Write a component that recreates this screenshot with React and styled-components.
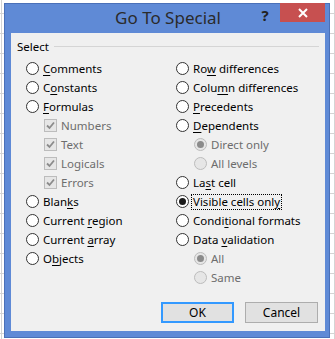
import React from "react";
import styled, { createGlobalStyle } from "styled-components";

const Global = createGlobalStyle`
  html, body { margin: 0; padding: 0; }
  body {
    width: 335px;
    height: 339px;
    overflow: hidden;
    font-family: "Noto Sans", "Open Sans", sans-serif;
    background-color: #fff;
    background-image:
      linear-gradient(to bottom, transparent 13px, #d4d4d4 13px, #d4d4d4 14px, transparent 14px),
      linear-gradient(to right, #d4d4d4 1px, transparent 1px);
    background-size: 100% 20px, 333px 100%;
    background-position: 0 0, 1px 0;
  }
`

const Page = styled.div`
    padding: 3px 5px 0 4px;
`

const Window = styled.div`
    width: 326px;
    height: 335px;
    box-sizing: border-box;
    border: 1px solid #4a70b8;
    background: #5f8ad6;
    display: flex;
    flex-direction: column;
`

const TitleBar = styled.div`
    height: 29px;
    display: flex;
    align-items: flex-start;
`

const Title = styled.div`
    flex: 1;
    text-align: center;
    font-size: 17px;
    color: #2b2b2b;
    padding-top: 2px;
    padding-left: 76px;
    white-space: nowrap;
`

const Help = styled.div`
    width: 20px;
    margin-top: 1px;
    font-size: 15px;
    font-weight: bold;
    color: #222;
    text-align: center;
    margin-right: 5px;
`

const Close = styled.div`
    width: 45px;
    height: 19px;
    margin-top: -1px;
    margin-right: 4px;
    background: #c75050;
    display: flex;
    align-items: center;
    justify-content: center;
`

const Body = styled.div`
    margin: 0 4px 6px 6px;
    flex: 1;
    background: #f0f0f0;
    padding: 0 6px;
    display: flex;
    flex-direction: column;
`

const GroupHead = styled.div`
    display: flex;
    align-items: center;
    height: 14px;
    margin-top: 6px;
    font-size: 11.5px;
    color: #000;
`

const GroupLine = styled.div`
    flex: 1;
    height: 1px;
    background: #d5d5d5;
    margin-left: 5px;
`

const Columns = styled.div`
    display: grid;
    grid-template-columns: 150px 1fr;
    padding-left: 9px;
    margin-top: 6px;
`

const Col = styled.div`
    display: flex;
    flex-direction: column;
`

const Row = styled.div`
    height: 19px;
    display: flex;
    align-items: center;
    padding-left: ${p => (p.$indent ? 18 : 0)}px;
    font-size: 11.5px;
    color: ${p => (p.$disabled ? "#6d6d6d" : "#000")};
    white-space: nowrap;
`

const Radio = styled.span`
    width: 13px;
    height: 13px;
    box-sizing: border-box;
    border-radius: 50%;
    border: 1px solid ${p => (p.$disabled ? "#bcbcbc" : "#333")};
    background: ${p => (p.$disabled ? "#e6e6e6" : "#fff")};
    margin-right: 4px;
    display: flex;
    align-items: center;
    justify-content: center;
    flex: none;
    &::after {
        content: "";
        display: ${p => (p.$on ? "block" : "none")};
        width: 7px;
        height: 7px;
        border-radius: 50%;
        background: ${p => (p.$disabled ? "#8b8b8b" : "#1a1a1a")};
    }
`

const Check = styled.span`
    width: 13px;
    height: 13px;
    box-sizing: border-box;
    border: 1px solid #bcbcbc;
    background: #e6e6e6;
    margin-right: 4px;
    flex: none;
    display: flex;
    align-items: center;
    justify-content: center;
`

const Label = styled.span`
    padding: 0 1px;
    line-height: 14px;
    border: 1px dotted ${p => (p.$focus ? "#000" : "transparent")};
    margin-left: -2px;
`

const Footer = styled.div`
    margin-top: auto;
    display: flex;
    justify-content: flex-end;
    gap: 11px;
    padding-right: 1px;
    margin-bottom: 8px;
`

const Button = styled.div`
    width: 73px;
    height: 21px;
    box-sizing: border-box;
    border: 1px solid ${p => (p.$default ? "#3399ff" : "#adadad")};
    box-shadow: ${p => (p.$default ? "inset 0 0 0 1px #3399ff" : "none")};
    background: #e1e1e1;
    font-size: 12px;
    color: #000;
    display: flex;
    align-items: center;
    justify-content: center;
`

const U = styled.u`
    text-underline-offset: 2px;
`

const CheckMark = () => (
    <svg width="11" height="11" viewBox="0 0 11 11">
        <path d="M2 5.5 L4.5 8 L9 2.5" fill="none" stroke="#8b8b8b" strokeWidth="1.8" />
    </svg>
)

const Item = ({ kind = "radio", on, disabled, indent, focus, children }) => (
    <Row $disabled={disabled} $indent={indent}>
        {kind === "check" ? (
            <Check>
                <CheckMark />
            </Check>
        ) : (
            <Radio $on={on} $disabled={disabled} />
        )}
        <Label $focus={focus}>{children}</Label>
    </Row>
)

const App = () => {
    return (
        <Page>
            <Global />
            <Window>
                <TitleBar>
                    <Title>Go To Special</Title>
                    <Help>?</Help>
                    <Close>
                        <svg width="10" height="10" viewBox="0 0 10 10">
                            <path d="M1 1 L9 9 M9 1 L1 9" stroke="#fff" strokeWidth="2" />
                        </svg>
                    </Close>
                </TitleBar>
                <Body>
                    <GroupHead>
                        Select
                        <GroupLine />
                    </GroupHead>
                    <Columns>
                        <Col>
                            <Item><U>C</U>omments</Item>
                            <Item>C<U>o</U>nstants</Item>
                            <Item><U>F</U>ormulas</Item>
                            <Item kind="check" disabled indent>Numbers</Item>
                            <Item kind="check" disabled indent>Text</Item>
                            <Item kind="check" disabled indent>Logicals</Item>
                            <Item kind="check" disabled indent>Errors</Item>
                            <Item>Blan<U>k</U>s</Item>
                            <Item>Current <U>r</U>egion</Item>
                            <Item>Current <U>a</U>rray</Item>
                            <Item>O<U>b</U>jects</Item>
                        </Col>
                        <Col>
                            <Item>Ro<U>w</U> differences</Item>
                            <Item>Colu<U>m</U>n differences</Item>
                            <Item><U>P</U>recedents</Item>
                            <Item><U>D</U>ependents</Item>
                            <Item on disabled indent>Direct only</Item>
                            <Item disabled indent>All levels</Item>
                            <Item>La<U>s</U>t cell</Item>
                            <Item on focus>Visible cells onl<U>y</U></Item>
                            <Item>Condi<U>t</U>ional formats</Item>
                            <Item>Data <U>v</U>alidation</Item>
                            <Item on disabled indent>All</Item>
                            <Item disabled indent>Same</Item>
                        </Col>
                    </Columns>
                    <Footer>
                        <Button $default>OK</Button>
                        <Button>Cancel</Button>
                    </Footer>
                </Body>
            </Window>
        </Page>
    );
};

export default App;
